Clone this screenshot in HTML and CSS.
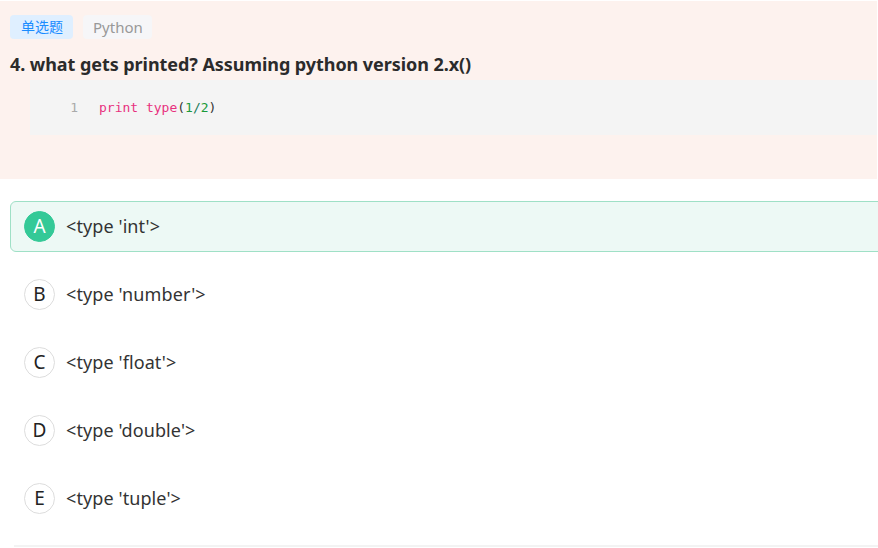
FILE: index.html
```html
<!DOCTYPE html>
<html>
<head>
<meta charset="utf-8">
<link rel="stylesheet" href="styles.css">
</head>
<body>
<div class="page">
  <section class="question">
    <div class="tags">
      <span class="tag tag-type">单选题</span>
      <span class="tag tag-lang">Python</span>
    </div>
    <h1 class="title">4. what gets printed? Assuming python version 2.x()</h1>
    <div class="code">
      <span class="ln">1</span>
      <code><span class="kw">print</span> <span class="kw">type</span>(<span class="num">1</span><span class="op">/</span><span class="num">2</span>)</code>
    </div>
  </section>
  <ul class="options">
    <li class="option selected"><span class="letter">A</span><span class="text">&lt;type 'int'&gt;</span></li>
    <li class="option"><span class="letter">B</span><span class="text">&lt;type 'number'&gt;</span></li>
    <li class="option"><span class="letter">C</span><span class="text">&lt;type 'float'&gt;</span></li>
    <li class="option"><span class="letter">D</span><span class="text">&lt;type 'double'&gt;</span></li>
    <li class="option"><span class="letter">E</span><span class="text">&lt;type 'tuple'&gt;</span></li>
  </ul>
  <div class="divider"></div>
</div>
</body>
</html>
```
FILE: styles.css
```css
html, body {
  margin: 0;
  padding: 0;
  background: #fff;
  overflow: hidden;
}
body {
  font-family: "Noto Sans", "Noto Sans CJK SC", sans-serif;
  color: #333;
}
.page {
  width: 900px;
  padding-top: 1px;
}
.question {
  background: #fdf2ee;
  height: 178px;
  width: 877px;
  box-sizing: border-box;
  padding: 14px 0 0 10px;
}
.tags {
  display: flex;
  gap: 10px;
}
.tag {
  height: 24px;
  line-height: 24px;
  border-radius: 4px;
  font-size: 14px;
}
.tag-type {
  background: #dfefff;
  color: #1a8cff;
  font-size: 14px;
  padding: 0 10px 0 11px;
}
.tag-lang {
  background: #f6f6f8;
  color: #999;
  font-size: 15px;
  padding: 0 10px;
  width: 69px;
  box-sizing: border-box;
  text-align: center;
}
.title {
  margin: 13px 0 0 0;
  font-size: 18px;
  font-weight: 700;
  line-height: 24px;
  letter-spacing: -0.06px;
  color: #2b2b2b;
}
.code {
  margin: 4px 0 0 20px;
  background: #f4f4f4;
  height: 55px;
  display: flex;
  align-items: center;
  font-family: "DejaVu Sans Mono", monospace;
  font-size: 13px;
  padding-bottom: 1px;
  box-sizing: border-box;
}
.ln {
  color: #aaa;
  width: 48px;
  text-align: right;
  margin-right: 21px;
}
.code code {
  font-family: inherit;
  color: #333;
}
.kw { color: #e8317e; }
.num { color: #1a9a3a; }
.op { color: #1a7a5a; }
.options {
  list-style: none;
  margin: 22px 0 0 0;
  padding: 0 0 0 10px;
  display: flex;
  flex-direction: column;
  gap: 17px;
}
.option {
  height: 51px;
  box-sizing: border-box;
  display: flex;
  align-items: center;
  padding-left: 13px;
  padding-bottom: 1px;
  border: 1px solid transparent;
  border-radius: 6px;
  font-size: 18px;
  color: #333;
}
.option.selected {
  background: #edf9f5;
  border-color: #9fe0c6;
}
.letter {
  width: 31px;
  height: 31px;
  box-sizing: border-box;
  border: 1px solid #ddd;
  border-radius: 50%;
  display: flex;
  align-items: center;
  justify-content: center;
  font-size: 19px;
  margin-right: 11px;
  color: #222;
  background: #fff;
}
.selected .letter {
  background: #34c997;
  border-color: #34c997;
  color: #fff;
}
.text {
  letter-spacing: 0.1px;
}
.divider {
  margin: 21px 0 0 14px;
  height: 2px;
  background: #f3f3f3;
}
```
